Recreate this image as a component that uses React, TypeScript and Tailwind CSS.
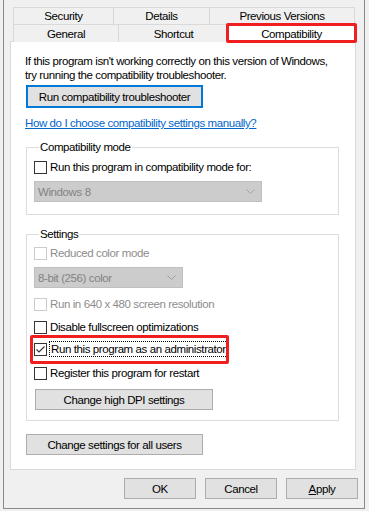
import React from 'react';

const font = { fontFamily: '"Liberation Sans", Arial, sans-serif' };

const Chevron = () => (
  <svg width="9" height="5" viewBox="0 0 9 5" className="mr-[6px]">
    <path d="M0.5 0.5 L4.5 4.5 L8.5 0.5" fill="none" stroke="#a0a0a0" strokeWidth="1" />
  </svg>
);

const CheckBox = ({ checked = false, disabled = false }: { checked?: boolean; disabled?: boolean }) => (
  <span
    className={`w-[13px] h-[13px] shrink-0 bg-white border flex items-center justify-center ${
      disabled ? 'border-[#cccccc]' : 'border-[#333333]'
    }`}
  >
    {checked && (
      <svg width="11" height="11" viewBox="0 0 11 11">
        <path d="M1.5 5.5 L4 8 L9.5 2.5" fill="none" stroke="#333" strokeWidth="1.1" />
      </svg>
    )}
  </span>
);

const Dropdown = ({ label, width }: { label: string; width: string }) => (
  <div className={`${width} h-[21px] bg-[#cccccc] border border-[#bfbfbf] flex items-center justify-between pl-[3px] text-[#838383]`}>
    <span>{label}</span>
    <Chevron />
  </div>
);

const WinButton = ({ children, className = '' }: { children: React.ReactNode; className?: string }) => (
  <div className={`h-[21px] bg-[#e1e1e1] border border-[#adadad] flex items-center justify-center ${className}`}>
    {children}
  </div>
);

const Tab = ({ label, w }: { label: string; w: string }) => (
  <div className={`${w} h-full bg-[#f0f0f0] border-t border-l border-[#d9d9d9] last:border-r flex items-center justify-center`}>
    {label}
  </div>
);

export default function App() {
  return (
    <div
      className="w-[369px] h-[511px] bg-[#f0f0f0] text-[11.5px] tracking-[-0.4px] leading-[16px] text-black overflow-hidden"
      style={font}
    >
      <div className="ml-[3px] w-[362px] h-[509px] border-x border-b border-[#8a8a8a] bg-[#f0f0f0] pt-[7px] flex flex-col">
        {/* tabs */}
        <div className="ml-[9px] w-[342px] h-[17px] flex">
          <Tab label="Security" w="w-[100px]" />
          <Tab label="Details" w="w-[96px]" />
          <Tab label="Previous Versions" w="w-[146px]" />
        </div>
        <div className="ml-[9px] w-[342px] h-[18px] flex relative z-10">
          <Tab label="General" w="w-[105px]" />
          <div className="w-[110px] h-full bg-[#f0f0f0] border-t border-l border-[#d9d9d9] flex items-center justify-center">
            Shortcut
          </div>
          <div className="w-[127px] h-[19px] bg-white border-t border-x border-[#d9d9d9] flex items-center justify-center relative">
            Compatibility
            <span className="absolute left-[-3px] top-[-2px] w-[131px] h-[20px] border-[3px] border-[#f01e1e] rounded-[2px]" />
          </div>
        </div>

        {/* panel */}
        <div className="ml-[6px] w-[346px] h-[429px] -mt-[1px] bg-white border border-[#d9d9d9] pl-[14px] pt-[12px]">
          <p className="leading-[14px]">
            If this program isn't working correctly on this version of Windows,
            <br />
            try running the compatibility troubleshooter.
          </p>
          <div className="ml-[1px] mt-[3px] w-[177px] h-[23px] bg-[#e1e1e1] border-2 border-[#0078d7] flex items-center justify-center">
            Run compatibility troubleshooter
          </div>
          <div className="mt-[7px] text-[#0066cc] underline">How do I choose compatibility settings manually?</div>

          <fieldset className="ml-[1px] mt-[8px] w-[313px] border border-[#dcdcdc] pl-[7px] pb-[12px]">
            <legend className="ml-[5px] px-[1px]">Compatibility mode</legend>
            <div className="mt-[4px] h-[16px] flex items-center gap-[3px]">
              <CheckBox />
              <span>Run this program in compatibility mode for:</span>
            </div>
            <div className="mt-[6px]">
              <Dropdown label="Windows 8" width="w-[228px]" />
            </div>
          </fieldset>

          <fieldset className="ml-[1px] mt-[11px] w-[313px] border border-[#dcdcdc] pl-[7px] pb-[10px]">
            <legend className="ml-[5px] px-[1px]">Settings</legend>
            <div className="mt-[3px] h-[16px] flex items-center gap-[3px] text-[#8d8d8d]">
              <CheckBox disabled />
              <span>Reduced color mode</span>
            </div>
            <div className="mt-[6px]">
              <Dropdown label="8-bit (256) color" width="w-[149px]" />
            </div>
            <div className="mt-[8px] h-[16px] flex items-center gap-[3px] text-[#8d8d8d]">
              <CheckBox disabled />
              <span>Run in 640 x 480 screen resolution</span>
            </div>
            <div className="mt-[7px] h-[16px] flex items-center gap-[3px]">
              <CheckBox />
              <span>Disable fullscreen optimizations</span>
            </div>
            <div className="mt-[6px] h-[16px] flex items-center gap-[2px] relative">
              <CheckBox checked />
              <span className="border border-dotted border-black leading-[14px] px-[1px]">
                Run this program as an administrator
              </span>
              <span className="absolute left-[-4px] top-[-6px] w-[199px] h-[29px] border-[3px] border-[#f01e1e] rounded-[2px]" />
            </div>
            <div className="mt-[8px] h-[16px] flex items-center gap-[3px]">
              <CheckBox />
              <span>Register this program for restart</span>
            </div>
            <WinButton className="mt-[8px] ml-[1px] w-[178px]">Change high DPI settings</WinButton>
          </fieldset>

          <WinButton className="mt-[13px] ml-[1px] w-[177px]">Change settings for all users</WinButton>
        </div>

        {/* dialog buttons */}
        <div className="mt-[8px] pr-[6px] flex justify-end gap-[9px]">
          <WinButton className="w-[72px]">OK</WinButton>
          <WinButton className="w-[72px]">Cancel</WinButton>
          <WinButton className="w-[72px]">
            <span>
              <span className="underline">A</span>pply
            </span>
          </WinButton>
        </div>
      </div>
    </div>
  );
}
